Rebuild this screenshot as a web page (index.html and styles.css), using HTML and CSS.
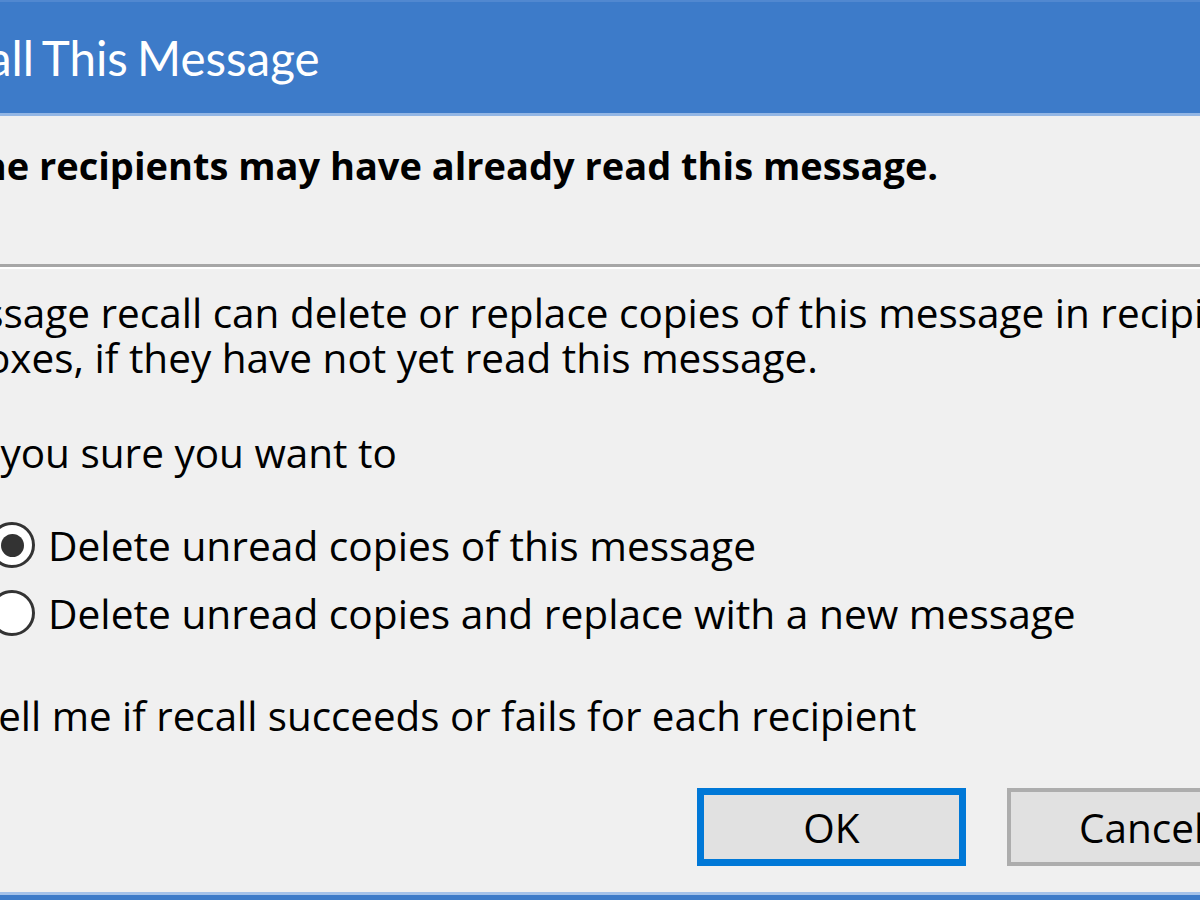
FILE: index.html
```html
<!DOCTYPE html>
<html lang="en">
<head>
<meta charset="utf-8">
<title>Recall This Message</title>
<link rel="stylesheet" href="styles.css">
</head>
<body>
<div class="dialog">
  <div class="titlebar">
    <span class="title">Recall This Message</span>
  </div>
  <div class="content">
    <p class="heading">Some of the recipients may have already read this message.</p>
    <div class="separator"></div>
    <p class="text">Message recall can delete or replace copies of this message in recipients'<br>Inboxes, if they have not yet read this message.</p>
    <p class="text question">Are you sure you want to</p>
    <div class="options">
      <label class="option">
        <span class="radio checked"></span>
        <span class="label">Delete unread copies of this message</span>
      </label>
      <label class="option">
        <span class="radio"></span>
        <span class="label">Delete unread copies and replace with a new message</span>
      </label>
    </div>
    <label class="check-row">
      <span class="checkbox"></span>
      <span class="label">Tell me if recall succeeds or fails for each recipient</span>
    </label>
    <div class="buttons">
      <button class="btn btn-default">OK</button>
      <button class="btn">Cancel</button>
    </div>
  </div>
</div>
</body>
</html>
```
FILE: styles.css
```css
html, body {
  margin: 0;
  padding: 0;
  height: 100%;
  overflow: hidden;
  background: #f0f0f0;
}

.dialog {
  width: 1386px;
  margin-left: -75px;
  background: #f0f0f0;
  border-bottom: 5px solid #3d7bc9;
  font-family: "Open Sans", "Noto Sans", sans-serif;
  color: #000;
}

.titlebar {
  height: 111px;
  display: flex;
  align-items: center;
  background: #3d7bc9;
  border-top: 2px solid #5188d0;
  border-bottom: 3px solid #93b6e4;
}

.title {
  margin-left: -13px;
  font-family: Lato, "Open Sans", sans-serif;
  font-size: 47.5px;
  font-weight: 400;
  word-spacing: -3px;
  color: #fff;
  white-space: nowrap;
}

.content {
  padding-bottom: 26px;
  border-bottom: 3px solid #a4c2ea;
}

.heading {
  margin: 23px 0 0 -122px;
  font-size: 38px;
  line-height: 52px;
  font-weight: 700;
  white-space: nowrap;
}

.separator {
  margin-top: 73px;
  height: 0;
  border-top: 3px solid #a6a6a6;
  border-bottom: 2px solid #ffffff;
}

.text {
  margin: 21px 0 0 0;
  font-size: 40.5px;
  line-height: 45px;
  white-space: nowrap;
}

.question {
  margin-top: 50px;
}

.options {
  margin-top: 36px;
  padding-left: 64px;
  display: flex;
  flex-direction: column;
}

.option {
  height: 68px;
  display: flex;
  align-items: center;
  gap: 13px;
  font-size: 40.7px;
  white-space: nowrap;
}

.radio {
  flex: none;
  width: 40px;
  height: 40px;
  border: 3.5px solid #333;
  border-radius: 50%;
  background: #fff;
  position: relative;
}

.radio.checked::after {
  content: "";
  position: absolute;
  left: 50%;
  top: 50%;
  width: 23px;
  height: 23px;
  margin: -11.5px 0 0 -11.5px;
  border-radius: 50%;
  background: #333;
}

.check-row {
  margin-top: 46px;
  height: 45px;
  display: flex;
  align-items: center;
  gap: 8px;
  font-size: 40.3px;
  line-height: 45px;
  white-space: nowrap;
}

.checkbox {
  flex: none;
  width: 37px;
  height: 37px;
  border: 3.5px solid #333;
  background: #fff;
}

.buttons {
  margin-top: 50px;
  display: flex;
  justify-content: flex-end;
  gap: 41px;
  padding-right: 35px;
}

.btn {
  width: 269px;
  height: 78px;
  box-sizing: border-box;
  background: #e1e1e1;
  border: 4px solid #adadad;
  font-family: "Open Sans", "Noto Sans", sans-serif;
  font-size: 40.5px;
  color: #000;
  padding: 0;
}

.btn-default {
  border: 7px solid #0078d7;
}
```
